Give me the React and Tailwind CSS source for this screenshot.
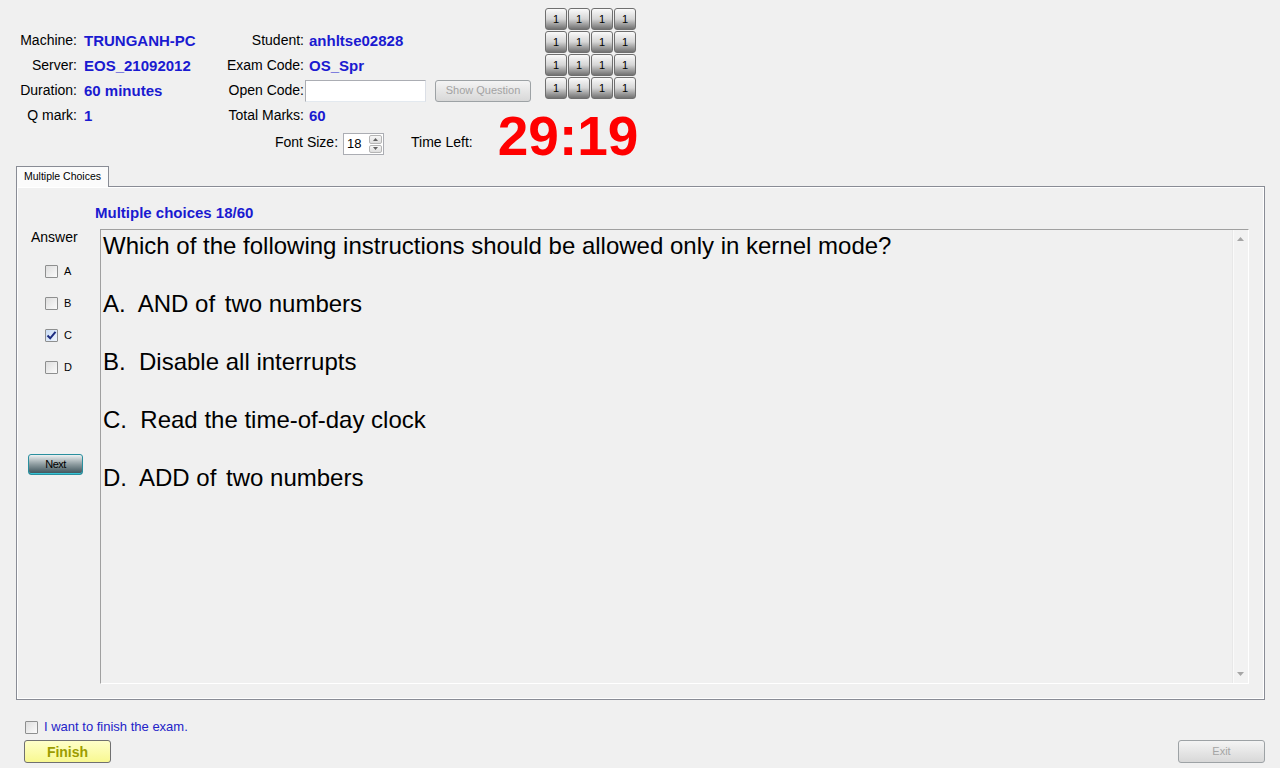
import { useState } from 'react';

const Check = ({ checked, onClick }) => (
    <span
        onClick={onClick}
        className={`w-[13px] h-[13px] border border-[#8e8f8f] rounded-[1px] flex items-center justify-center shrink-0 ${checked ? 'bg-linear-to-br from-[#c9dcf5] to-[#eef4fc]' : 'bg-linear-to-br from-[#dedede] to-[#fbfbfb]'}`}
    >
        {checked && (
            <svg width="11" height="11" viewBox="0 0 11 11">
                <path d="M1.5 5.5 L4.2 8.3 L9.5 1.8" fill="none" stroke="#1c2c80" strokeWidth="2" />
            </svg>
        )}
    </span>
);

const Info = ({ label, value }) => (
    <>
        <div className="text-right h-[25px] leading-[25px]">{label}</div>
        <div className="h-[25px] leading-[25px] font-bold text-[15px] text-[#1a1ad0]">{value}</div>
    </>
);

const App = () => {
    const [answers, setAnswers] = useState({ A: false, B: false, C: true, D: false });
    const [finish, setFinish] = useState(false);

    const toggle = (k) => setAnswers({ ...answers, [k]: !answers[k] });

    return (
        <div className="w-[1280px] h-[768px] overflow-hidden bg-[#f0f0f0] text-[14px] text-black font-['Liberation_Sans',Arial,sans-serif]">
            {/* Header info */}
            <div className="flex h-[128px]">
                <div className="w-[210px] pt-[28px] grid grid-cols-[77px_auto] gap-x-[7px] content-start">
                    <Info label="Machine:" value="TRUNGANH-PC" />
                    <Info label="Server:" value="EOS_21092012" />
                    <Info label="Duration:" value="60 minutes" />
                    <Info label="Q mark:" value="1" />
                </div>

                <div className="w-[321px] pt-[28px] grid grid-cols-[94px_226px] gap-x-[1px] content-start">
                    <div className="text-right h-[25px] leading-[25px]">Student:</div>
                    <div className="pl-[4px] h-[25px] leading-[25px] font-bold text-[15px] text-[#1a1ad0]">anhltse02828</div>
                    <div className="text-right h-[25px] leading-[25px]">Exam Code:</div>
                    <div className="pl-[4px] h-[25px] leading-[25px] font-bold text-[15px] text-[#1a1ad0]">OS_Spr</div>
                    <div className="text-right h-[25px] leading-[25px]">Open Code:</div>
                    <div className="h-[25px] flex items-center">
                        <div className="w-[121px] h-[22px] bg-white border border-[#abadb3] border-b-[#e3e9ef] border-r-[#dbdfe6]" />
                        <button className="ml-[9px] w-[96px] h-[22px] rounded-[3px] border border-[#9da2a5] bg-linear-to-b from-[#f4f4f4] to-[#d8d8d8] text-[11px] text-[#a3a3a3]">
                            Show Question
                        </button>
                    </div>
                    <div className="text-right h-[25px] leading-[25px]">Total Marks:</div>
                    <div className="pl-[4px] h-[25px] leading-[25px] font-bold text-[15px] text-[#1a1ad0]">60</div>
                </div>

                <div className="ml-[14px] mt-[8px] grid grid-cols-4 gap-px self-start">
                    {Array.from({ length: 16 }).map((_, i) => (
                        <div
                            key={i}
                            className="w-[22px] h-[22px] rounded-[3px] border border-[#6f6f6f] bg-linear-to-b from-[#fafafa] via-[#d6d6d6] to-[#727272] flex items-center justify-center text-[11px] text-black"
                        >
                            1
                        </div>
                    ))}
                </div>
            </div>

            {/* Font size + timer */}
            <div className="flex items-start h-[38px] pl-[275px]">
                <span className="mt-[6px] leading-[16px]">Font Size:</span>
                <div className="ml-[5px] mt-[5px] w-[41px] h-[22px] bg-white border border-[#abadb3] flex">
                    <span className="flex-1 pl-[3px] text-[13px] leading-[20px]">18</span>
                    <div className="w-[15px] flex flex-col gap-px p-px">
                        <div className="flex-1 rounded-[2px] border border-[#b5b5b5] bg-linear-to-b from-[#f7f7f7] to-[#dedede] flex items-center justify-center">
                            <svg width="5" height="3" viewBox="0 0 5 3"><path d="M0 3 L2.5 0 L5 3 Z" fill="#606060" /></svg>
                        </div>
                        <div className="flex-1 rounded-[2px] border border-[#b5b5b5] bg-linear-to-b from-[#f7f7f7] to-[#dedede] flex items-center justify-center">
                            <svg width="5" height="3" viewBox="0 0 5 3"><path d="M0 0 L2.5 3 L5 0 Z" fill="#606060" /></svg>
                        </div>
                    </div>
                </div>
                <span className="ml-[27px] mt-[6px] leading-[16px]">Time Left:</span>
                <span className="ml-[25px] -mt-[19px] text-[55px] leading-none font-bold text-[#ff0000]">29:19</span>
            </div>

            {/* Tab */}
            <div className="ml-[16px] relative z-10 -mb-px w-[93px] h-[21px] bg-[#fbfbfb] border border-b-0 border-[#898c95] text-[10.5px] leading-[19px] text-center">
                Multiple Choices
            </div>
            <div className="ml-[16px] w-[1249px] h-[514px] border border-[#898c95] shadow-[inset_1px_1px_0_#ffffff,inset_-1px_-1px_0_#ffffff] flex flex-col">
                <div className="mt-[17px] pl-[78px] leading-[18px] text-[15px] font-bold text-[#1a1ad0]">
                    Multiple choices 18/60
                </div>
                <div className="mt-[7px] flex">
                    <div className="w-[83px] flex flex-col">
                        <div className="pl-[14px] leading-[16px]">Answer</div>
                        <div className="mt-[10px] flex flex-col">
                            {['A', 'B', 'C', 'D'].map((k) => (
                                <div key={k} className="h-[32px] pl-[28px] flex items-center gap-[6px]">
                                    <Check checked={answers[k]} onClick={() => toggle(k)} />
                                    <span className="text-[11px]">{k}</span>
                                </div>
                            ))}
                        </div>
                        <div className="mt-[70px] pl-[11px]">
                            <button className="w-[55px] h-[21px] rounded-[3px] border border-[#2a8f9e] bg-linear-to-b from-[#eef2f3] via-[#8c9a9e] to-[#3b5058] text-[11px] text-black leading-[18px] tracking-[-0.5px] shadow-[inset_0_-1px_0_#35c4d6]">
                                Next
                            </button>
                        </div>
                    </div>

                    <div className="w-[1149px] h-[455px] border border-t-[#a0a0a0] border-l-[#a0a0a0] border-b-white border-r-white flex">
                        <div className="flex-1 pt-[1px] pl-[2px] text-[24px] leading-[29px] whitespace-pre">
                            <p>Which of the following instructions should be allowed only in kernel mode?</p>
                            <p>&nbsp;</p>
                            <p>A.  AND of <span className="ml-[3px]">two numbers</span></p>
                            <p>&nbsp;</p>
                            <p>B.  Disable all interrupts</p>
                            <p>&nbsp;</p>
                            <p>C.  Read the time-of-day clock</p>
                            <p>&nbsp;</p>
                            <p>D.  ADD of <span className="ml-[3px]">two numbers</span></p>
                        </div>
                        <div className="w-[16px] border-l border-[#e8e8e8] bg-[#f2f2f2] flex flex-col items-center justify-between pt-[7px] pb-[7px] shadow-[inset_1px_0_0_#fafafa]">
                            <svg width="7" height="4" viewBox="0 0 7 4"><path d="M0 4 L3.5 0 L7 4 Z" fill="#a6a6a6" /></svg>
                            <svg width="7" height="4" viewBox="0 0 7 4"><path d="M0 0 L3.5 4 L7 0 Z" fill="#a6a6a6" /></svg>
                        </div>
                    </div>
                </div>
            </div>

            {/* Bottom */}
            <div className="mt-[19px] h-[16px] pl-[25px] flex items-center gap-[6px]">
                <Check checked={finish} onClick={() => setFinish(!finish)} />
                <span className="text-[13px] text-[#2323c8]">I want to finish the exam.</span>
            </div>
            <div className="mt-[5px] pl-[24px] pr-[15px] flex">
                <button className="w-[87px] h-[23px] rounded-[3px] border border-[#707070] bg-linear-to-b from-[#ffffc8] to-[#f8f890] text-[14px] font-bold text-[#9c9c00] leading-[20px]">
                    Finish
                </button>
                <button className="ml-auto w-[87px] h-[23px] rounded-[3px] border border-[#9da2a5] bg-linear-to-b from-[#f4f4f4] to-[#d8d8d8] text-[11px] text-[#a5a5a5]">
                    Exit
                </button>
            </div>
        </div>
    );
};

export default App;
